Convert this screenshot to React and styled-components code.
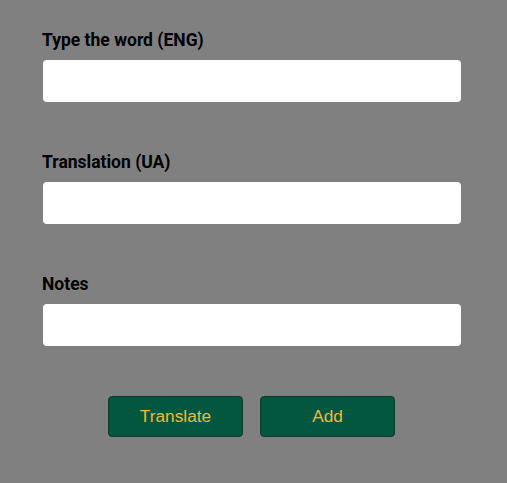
import React from 'react';
import styled, { createGlobalStyle } from 'styled-components';

const GlobalStyle = createGlobalStyle`
  html, body {
    margin: 0;
    padding: 0;
    background-color: #808080;
  }
`;

const Form = styled.form`
  width: 418px;
  padding: 30px 0 0 43px;
  display: flex;
  flex-direction: column;
  gap: 50px;
`;

const Field = styled.div`
  display: flex;
  flex-direction: column;
`;

const Label = styled.label`
  font-family: Roboto, "Liberation Sans", sans-serif;
  font-weight: 700;
  font-size: 17.5px;
  line-height: 20px;
  color: #000000;
  margin-bottom: 10px;
  margin-left: -1px;
`;

const Input = styled.input`
  box-sizing: border-box;
  height: 42px;
  width: 100%;
  border: none;
  border-radius: 4px;
  background: #ffffff;
  padding: 0 10px;
  font-size: 16px;
  outline: none;
`;

const Actions = styled.div`
  display: flex;
  justify-content: center;
  gap: 17px;
  padding-right: 1px;
`;

const Button = styled.button`
  box-sizing: border-box;
  width: 135px;
  height: 41px;
  background-color: #03573f;
  border: 1px solid #0b3b2b;
  border-radius: 4px;
  color: #f0b83e;
  font-family: "Liberation Sans", Arial, sans-serif;
  font-size: 17.3px;
  cursor: pointer;
`;

const App = () => {
  return (
    <>
      <GlobalStyle />
      <Form onSubmit={(e) => e.preventDefault()}>
        <Field>
          <Label htmlFor="eng">Type the word (ENG)</Label>
          <Input id="eng" type="text" />
        </Field>
        <Field>
          <Label htmlFor="ua">Translation (UA)</Label>
          <Input id="ua" type="text" />
        </Field>
        <Field>
          <Label htmlFor="notes">Notes</Label>
          <Input id="notes" type="text" />
        </Field>
        <Actions>
          <Button type="button">Translate</Button>
          <Button type="submit">Add</Button>
        </Actions>
      </Form>
    </>
  );
};

export default App;
